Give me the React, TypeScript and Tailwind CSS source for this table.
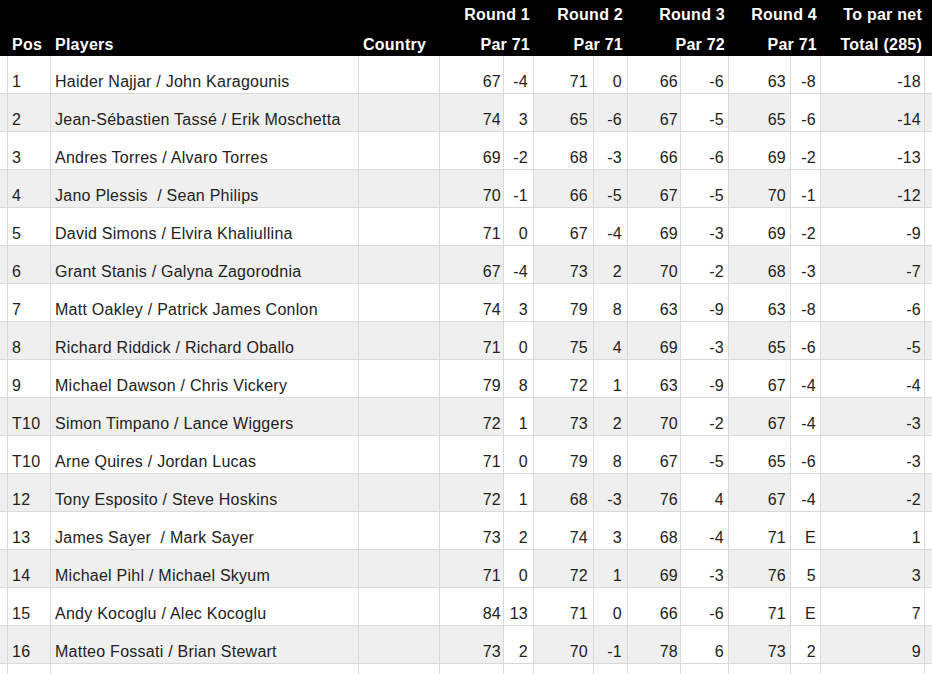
import React from "react";

type Row = [string, string, string, string, string, string, string, string, string, string, string];

const rows: Row[] = [
  ["1", "Haider Najjar / John Karagounis", "67", "-4", "71", "0", "66", "-6", "63", "-8", "-18"],
  ["2", "Jean-Sébastien Tassé / Erik Moschetta", "74", "3", "65", "-6", "67", "-5", "65", "-6", "-14"],
  ["3", "Andres Torres / Alvaro Torres", "69", "-2", "68", "-3", "66", "-6", "69", "-2", "-13"],
  ["4", "Jano Plessis  / Sean Philips", "70", "-1", "66", "-5", "67", "-5", "70", "-1", "-12"],
  ["5", "David Simons / Elvira Khaliullina", "71", "0", "67", "-4", "69", "-3", "69", "-2", "-9"],
  ["6", "Grant Stanis / Galyna Zagorodnia", "67", "-4", "73", "2", "70", "-2", "68", "-3", "-7"],
  ["7", "Matt Oakley / Patrick James Conlon", "74", "3", "79", "8", "63", "-9", "63", "-8", "-6"],
  ["8", "Richard Riddick / Richard Oballo", "71", "0", "75", "4", "69", "-3", "65", "-6", "-5"],
  ["9", "Michael Dawson / Chris Vickery", "79", "8", "72", "1", "63", "-9", "67", "-4", "-4"],
  ["T10", "Simon Timpano / Lance Wiggers", "72", "1", "73", "2", "70", "-2", "67", "-4", "-3"],
  ["T10", "Arne Quires / Jordan Lucas", "71", "0", "79", "8", "67", "-5", "65", "-6", "-3"],
  ["12", "Tony Esposito / Steve Hoskins", "72", "1", "68", "-3", "76", "4", "67", "-4", "-2"],
  ["13", "James Sayer  / Mark Sayer", "73", "2", "74", "3", "68", "-4", "71", "E", "1"],
  ["14", "Michael Pihl / Michael Skyum", "71", "0", "72", "1", "69", "-3", "76", "5", "3"],
  ["15", "Andy Kocoglu / Alec Kocoglu", "84", "13", "71", "0", "66", "-6", "71", "E", "7"],
  ["16", "Matteo Fossati / Brian Stewart", "73", "2", "70", "-1", "78", "6", "73", "2", "9"],
];

const grid =
  "grid grid-cols-[8px_43px_308px_81px_64px_30px_60px_34px_53px_48px_62px_30px_104px_1fr]";

const cell = "h-[38px] border-r border-b border-[#d9d9d9] flex items-end pb-[2px] leading-[18px] whitespace-pre";

function BodyRow({ r, gray }: { r: Row | null; gray: boolean }) {
  const g = gray ? "bg-[#efefef]" : "bg-white";
  const w = "bg-white";
  const v = r ?? ["", "", "", "", "", "", "", "", "", "", ""];
  return (
    <>
      <div className={`${cell} ${g}`}></div>
      <div className={`${cell} ${g} pl-[4px]`}>{v[0]}</div>
      <div className={`${cell} ${g} pl-[4px]`}>{v[1]}</div>
      <div className={`${cell} ${g}`}></div>
      <div className={`${cell} ${g} justify-end pr-[2px]`}>{v[2]}</div>
      <div className={`${cell} ${w} justify-end pr-[5px]`}>{v[3]}</div>
      <div className={`${cell} ${g} justify-end pr-[5px]`}>{v[4]}</div>
      <div className={`${cell} ${g} justify-end pr-[5px]`}>{v[5]}</div>
      <div className={`${cell} ${g} justify-end pr-[2px]`}>{v[6]}</div>
      <div className={`${cell} ${w} justify-end pr-[4px]`}>{v[7]}</div>
      <div className={`${cell} ${g} justify-end pr-[4px]`}>{v[8]}</div>
      <div className={`${cell} ${w} justify-end pr-[4px]`}>{v[9]}</div>
      <div className={`${cell} ${g} justify-end pr-[3px]`}>{v[10]}</div>
      <div className={`${cell} ${g} border-r-0`}></div>
    </>
  );
}

export default function App() {
  const h1 = "h-[28px] flex items-end pb-[4px] leading-[18px]";
  const h2 = "h-[28px] flex items-end pb-[2px] leading-[18px]";
  return (
    <div
      className="w-[932px] h-[674px] overflow-hidden bg-white text-[16px] tracking-[0.25px] text-[#222222]"
      style={{ fontFamily: '"Liberation Sans", Arial, sans-serif' }}
    >
      <div className={`${grid} bg-black text-white font-bold`}>
        <div className={`${h1} col-span-4`}></div>
        <div className={`${h1} col-span-2 justify-end pr-[4px]`}>Round 1</div>
        <div className={`${h1} col-span-2 justify-end pr-[5px]`}>Round 2</div>
        <div className={`${h1} col-span-2 justify-end pr-[4px]`}>Round 3</div>
        <div className={`${h1} col-span-2 justify-end pr-[4px]`}>Round 4</div>
        <div className={`${h1} justify-end pr-[3px]`}>To par net</div>
        <div className={h1}></div>

        <div className={h2}></div>
        <div className={`${h2} pl-[4px]`}>Pos</div>
        <div className={`${h2} pl-[4px]`}>Players</div>
        <div className={`${h2} pl-[4px]`}>Country</div>
        <div className={`${h2} col-span-2 justify-end pr-[4px]`}>Par 71</div>
        <div className={`${h2} col-span-2 justify-end pr-[5px]`}>Par 71</div>
        <div className={`${h2} col-span-2 justify-end pr-[4px]`}>Par 72</div>
        <div className={`${h2} col-span-2 justify-end pr-[4px]`}>Par 71</div>
        <div className={`${h2} justify-end pr-[3px]`}>Total (285)</div>
        <div className={h2}></div>
      </div>
      <div className={grid}>
        {rows.map((r, i) => (
          <BodyRow key={i} r={r} gray={i % 2 === 1} />
        ))}
        <BodyRow r={null} gray={false} />
      </div>
    </div>
  );
}
